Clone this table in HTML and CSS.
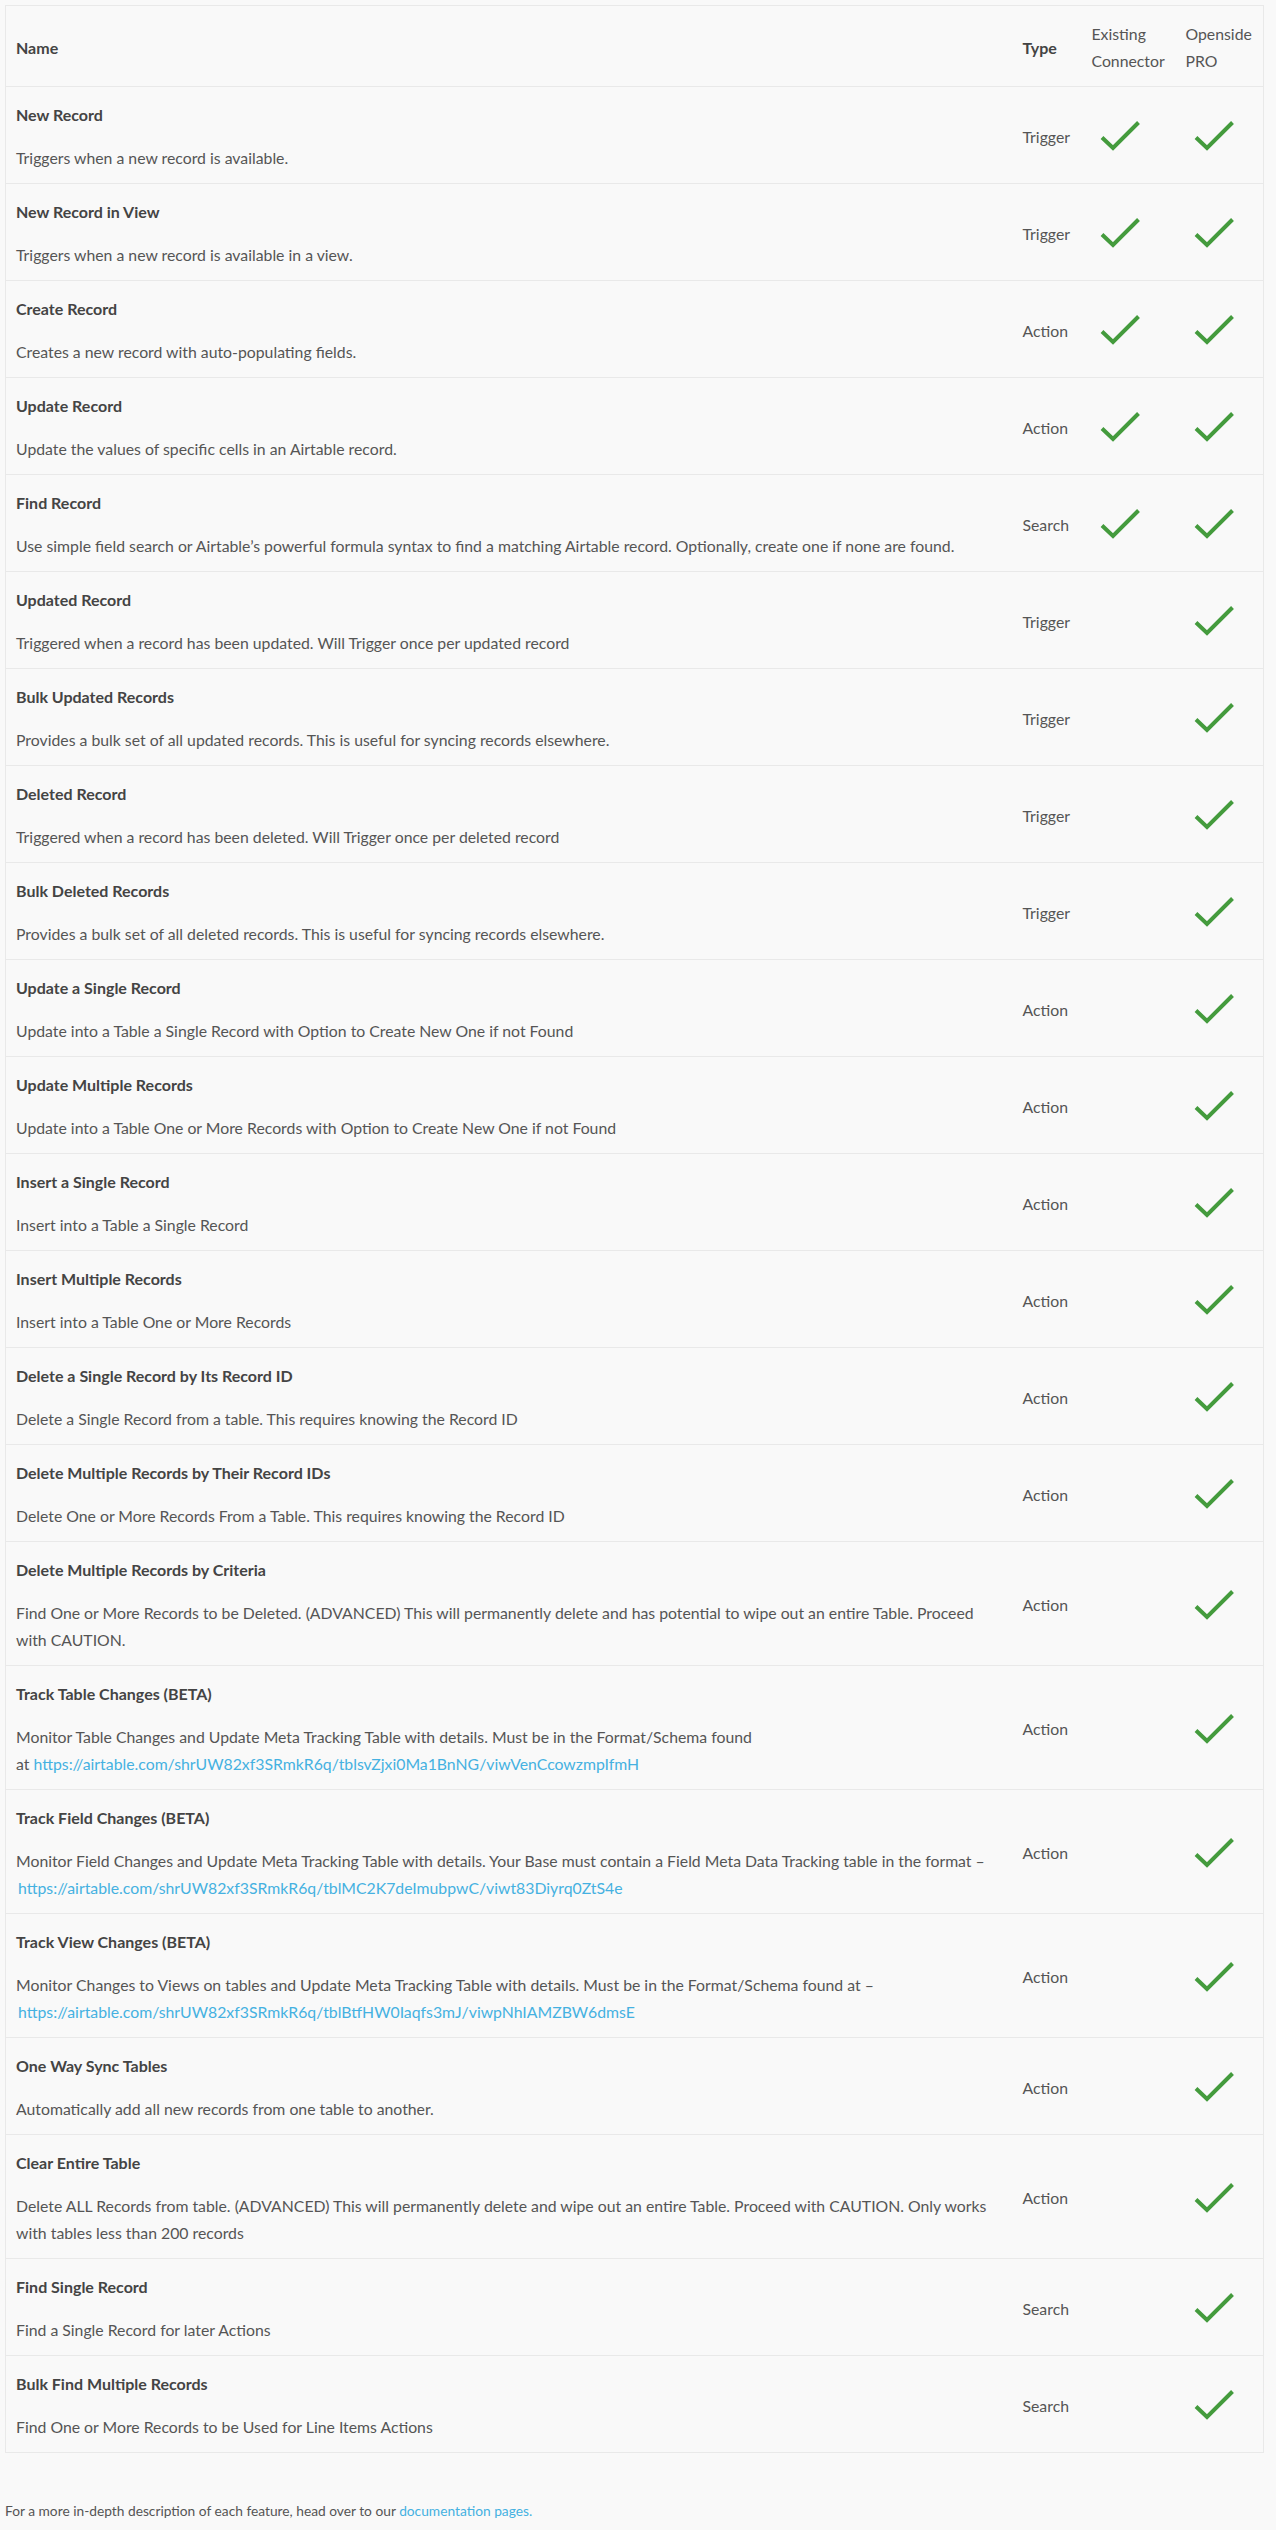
FILE: index.html
```html
<!DOCTYPE html>
<html lang="en">
<head>
<meta charset="utf-8">
<title>Airtable Features</title>
<link rel="stylesheet" href="styles.css">
</head>
<body>
<div class="page">
<table class="features">
  <colgroup>
    <col class="col-name">
    <col class="col-type">
    <col class="col-existing">
    <col class="col-pro">
  </colgroup>
  <thead>
    <tr>
      <th class="th-bold">Name</th>
      <th class="th-bold">Type</th>
      <th>Existing Connector</th>
      <th>Openside PRO</th>
    </tr>
  </thead>
  <tbody>
    <tr>
      <td><div class="title">New Record</div><div class="desc">Triggers when a new record is available.</div></td>
      <td>Trigger</td>
      <td><svg class="check" viewBox="0 0 40 30"><path d="M2 16.5 L13 27 L38.5 1.5"/></svg></td>
      <td><svg class="check" viewBox="0 0 40 30"><path d="M2 16.5 L13 27 L38.5 1.5"/></svg></td>
    </tr>
    <tr>
      <td><div class="title">New Record in View</div><div class="desc">Triggers when a new record is available in a view.</div></td>
      <td>Trigger</td>
      <td><svg class="check" viewBox="0 0 40 30"><path d="M2 16.5 L13 27 L38.5 1.5"/></svg></td>
      <td><svg class="check" viewBox="0 0 40 30"><path d="M2 16.5 L13 27 L38.5 1.5"/></svg></td>
    </tr>
    <tr>
      <td><div class="title">Create Record</div><div class="desc">Creates a new record with auto-populating fields.</div></td>
      <td>Action</td>
      <td><svg class="check" viewBox="0 0 40 30"><path d="M2 16.5 L13 27 L38.5 1.5"/></svg></td>
      <td><svg class="check" viewBox="0 0 40 30"><path d="M2 16.5 L13 27 L38.5 1.5"/></svg></td>
    </tr>
    <tr>
      <td><div class="title">Update Record</div><div class="desc">Update the values of specific cells in an Airtable record.</div></td>
      <td>Action</td>
      <td><svg class="check" viewBox="0 0 40 30"><path d="M2 16.5 L13 27 L38.5 1.5"/></svg></td>
      <td><svg class="check" viewBox="0 0 40 30"><path d="M2 16.5 L13 27 L38.5 1.5"/></svg></td>
    </tr>
    <tr>
      <td><div class="title">Find Record</div><div class="desc">Use simple field search or Airtable’s powerful formula syntax to find a matching Airtable record. Optionally, create one if none are found.</div></td>
      <td>Search</td>
      <td><svg class="check" viewBox="0 0 40 30"><path d="M2 16.5 L13 27 L38.5 1.5"/></svg></td>
      <td><svg class="check" viewBox="0 0 40 30"><path d="M2 16.5 L13 27 L38.5 1.5"/></svg></td>
    </tr>
    <tr>
      <td><div class="title">Updated Record</div><div class="desc">Triggered when a record has been updated. Will Trigger once per updated record</div></td>
      <td>Trigger</td>
      <td></td>
      <td><svg class="check" viewBox="0 0 40 30"><path d="M2 16.5 L13 27 L38.5 1.5"/></svg></td>
    </tr>
    <tr>
      <td><div class="title">Bulk Updated Records</div><div class="desc">Provides a bulk set of all updated records. This is useful for syncing records elsewhere.</div></td>
      <td>Trigger</td>
      <td></td>
      <td><svg class="check" viewBox="0 0 40 30"><path d="M2 16.5 L13 27 L38.5 1.5"/></svg></td>
    </tr>
    <tr>
      <td><div class="title">Deleted Record</div><div class="desc">Triggered when a record has been deleted. Will Trigger once per deleted record</div></td>
      <td>Trigger</td>
      <td></td>
      <td><svg class="check" viewBox="0 0 40 30"><path d="M2 16.5 L13 27 L38.5 1.5"/></svg></td>
    </tr>
    <tr>
      <td><div class="title">Bulk Deleted Records</div><div class="desc">Provides a bulk set of all deleted records. This is useful for syncing records elsewhere.</div></td>
      <td>Trigger</td>
      <td></td>
      <td><svg class="check" viewBox="0 0 40 30"><path d="M2 16.5 L13 27 L38.5 1.5"/></svg></td>
    </tr>
    <tr>
      <td><div class="title">Update a Single Record</div><div class="desc">Update into a Table a Single Record with Option to Create New One if not Found</div></td>
      <td>Action</td>
      <td></td>
      <td><svg class="check" viewBox="0 0 40 30"><path d="M2 16.5 L13 27 L38.5 1.5"/></svg></td>
    </tr>
    <tr>
      <td><div class="title">Update Multiple Records</div><div class="desc">Update into a Table One or More Records with Option to Create New One if not Found</div></td>
      <td>Action</td>
      <td></td>
      <td><svg class="check" viewBox="0 0 40 30"><path d="M2 16.5 L13 27 L38.5 1.5"/></svg></td>
    </tr>
    <tr>
      <td><div class="title">Insert a Single Record</div><div class="desc">Insert into a Table a Single Record</div></td>
      <td>Action</td>
      <td></td>
      <td><svg class="check" viewBox="0 0 40 30"><path d="M2 16.5 L13 27 L38.5 1.5"/></svg></td>
    </tr>
    <tr>
      <td><div class="title">Insert Multiple Records</div><div class="desc">Insert into a Table One or More Records</div></td>
      <td>Action</td>
      <td></td>
      <td><svg class="check" viewBox="0 0 40 30"><path d="M2 16.5 L13 27 L38.5 1.5"/></svg></td>
    </tr>
    <tr>
      <td><div class="title">Delete a Single Record by Its Record ID</div><div class="desc">Delete a Single Record from a table. This requires knowing the Record ID</div></td>
      <td>Action</td>
      <td></td>
      <td><svg class="check" viewBox="0 0 40 30"><path d="M2 16.5 L13 27 L38.5 1.5"/></svg></td>
    </tr>
    <tr>
      <td><div class="title">Delete Multiple Records by Their Record IDs</div><div class="desc">Delete One or More Records From a Table. This requires knowing the Record ID</div></td>
      <td>Action</td>
      <td></td>
      <td><svg class="check" viewBox="0 0 40 30"><path d="M2 16.5 L13 27 L38.5 1.5"/></svg></td>
    </tr>
    <tr>
      <td><div class="title">Delete Multiple Records by Criteria</div><div class="desc">Find One or More Records to be Deleted. (ADVANCED) This will permanently delete and has potential to wipe out an entire Table. Proceed with CAUTION.</div></td>
      <td>Action</td>
      <td></td>
      <td><svg class="check" viewBox="0 0 40 30"><path d="M2 16.5 L13 27 L38.5 1.5"/></svg></td>
    </tr>
    <tr>
      <td><div class="title">Track Table Changes (BETA)</div><div class="desc"><span>Monitor Table Changes and Update Meta Tracking Table with details. Must be in the Format/Schema found</span> <span class="nowrap">at <a href="#">https://airtable.com/shrUW82xf3SRmkR6q/tblsvZjxi0Ma1BnNG/viwVenCcowzmpIfmH</a></span></div></td>
      <td>Action</td>
      <td></td>
      <td><svg class="check" viewBox="0 0 40 30"><path d="M2 16.5 L13 27 L38.5 1.5"/></svg></td>
    </tr>
    <tr>
      <td><div class="title">Track Field Changes (BETA)</div><div class="desc">Monitor Field Changes and Update Meta Tracking Table with details. Your Base must contain a Field Meta Data Tracking table in the format – <a href="#" class="lead">https://airtable.com/shrUW82xf3SRmkR6q/tblMC2K7deImubpwC/viwt83Diyrq0ZtS4e</a></div></td>
      <td>Action</td>
      <td></td>
      <td><svg class="check" viewBox="0 0 40 30"><path d="M2 16.5 L13 27 L38.5 1.5"/></svg></td>
    </tr>
    <tr>
      <td><div class="title">Track View Changes (BETA)</div><div class="desc">Monitor Changes to Views on tables and Update Meta Tracking Table with details. Must be in the Format/Schema found at – <a href="#" class="lead">https://airtable.com/shrUW82xf3SRmkR6q/tblBtfHW0Iaqfs3mJ/viwpNhIAMZBW6dmsE</a></div></td>
      <td>Action</td>
      <td></td>
      <td><svg class="check" viewBox="0 0 40 30"><path d="M2 16.5 L13 27 L38.5 1.5"/></svg></td>
    </tr>
    <tr>
      <td><div class="title">One Way Sync Tables</div><div class="desc">Automatically add all new records from one table to another.</div></td>
      <td>Action</td>
      <td></td>
      <td><svg class="check" viewBox="0 0 40 30"><path d="M2 16.5 L13 27 L38.5 1.5"/></svg></td>
    </tr>
    <tr>
      <td><div class="title">Clear Entire Table</div><div class="desc">Delete ALL Records from table. (ADVANCED) This will permanently delete and wipe out an entire Table. Proceed with CAUTION. Only works with tables less than 200 records</div></td>
      <td>Action</td>
      <td></td>
      <td><svg class="check" viewBox="0 0 40 30"><path d="M2 16.5 L13 27 L38.5 1.5"/></svg></td>
    </tr>
    <tr>
      <td><div class="title">Find Single Record</div><div class="desc">Find a Single Record for later Actions</div></td>
      <td>Search</td>
      <td></td>
      <td><svg class="check" viewBox="0 0 40 30"><path d="M2 16.5 L13 27 L38.5 1.5"/></svg></td>
    </tr>
    <tr>
      <td><div class="title">Bulk Find Multiple Records</div><div class="desc">Find One or More Records to be Used for Line Items Actions</div></td>
      <td>Search</td>
      <td></td>
      <td><svg class="check" viewBox="0 0 40 30"><path d="M2 16.5 L13 27 L38.5 1.5"/></svg></td>
    </tr>
  </tbody>
</table>
<p class="footnote">For a more in-depth description of each feature, head over to our <a href="#">documentation pages.</a></p>
</div>
</body>
</html>
```

FILE: styles.css
```css
html, body {
  margin: 0;
  padding: 0;
  background: #f9f9f9;
}

.page {
  padding: 5px;
  width: 1259px;
  font-family: Lato, "Open Sans", sans-serif;
  font-size: 15.8px;
  line-height: 27px;
  color: #555;
}

a {
  color: #45b1e1;
  text-decoration: none;
}

.features {
  width: 1259px;
  table-layout: fixed;
  border-collapse: collapse;
  border: 1px solid #e9e9e9;
}

.col-type { width: 69px; }
.col-existing { width: 94px; }
.col-pro { width: 88px; }

.features th,
.features td {
  padding: 14px 10px 12px;
  text-align: left;
  vertical-align: middle;
}

.features th {
  font-weight: normal;
}

.features th.th-bold {
  font-weight: bold;
  font-size: 16px;
  color: #444;
}

.features tbody tr {
  border-top: 1px solid #e9e9e9;
}

.title {
  font-weight: bold;
  font-size: 16px;
  color: #444;
  margin-bottom: 16px;
}

.nowrap {
  white-space: nowrap;
}

.desc a.lead {
  margin-left: 2px;
}

.check {
  display: block;
  width: 40px;
  height: 30px;
  margin-left: 8px;
  fill: none;
  stroke: #449b3d;
  stroke-width: 4;
}

.footnote {
  margin: 46px 0 0;
  font-size: 13.75px;
  line-height: 23px;
}
```
